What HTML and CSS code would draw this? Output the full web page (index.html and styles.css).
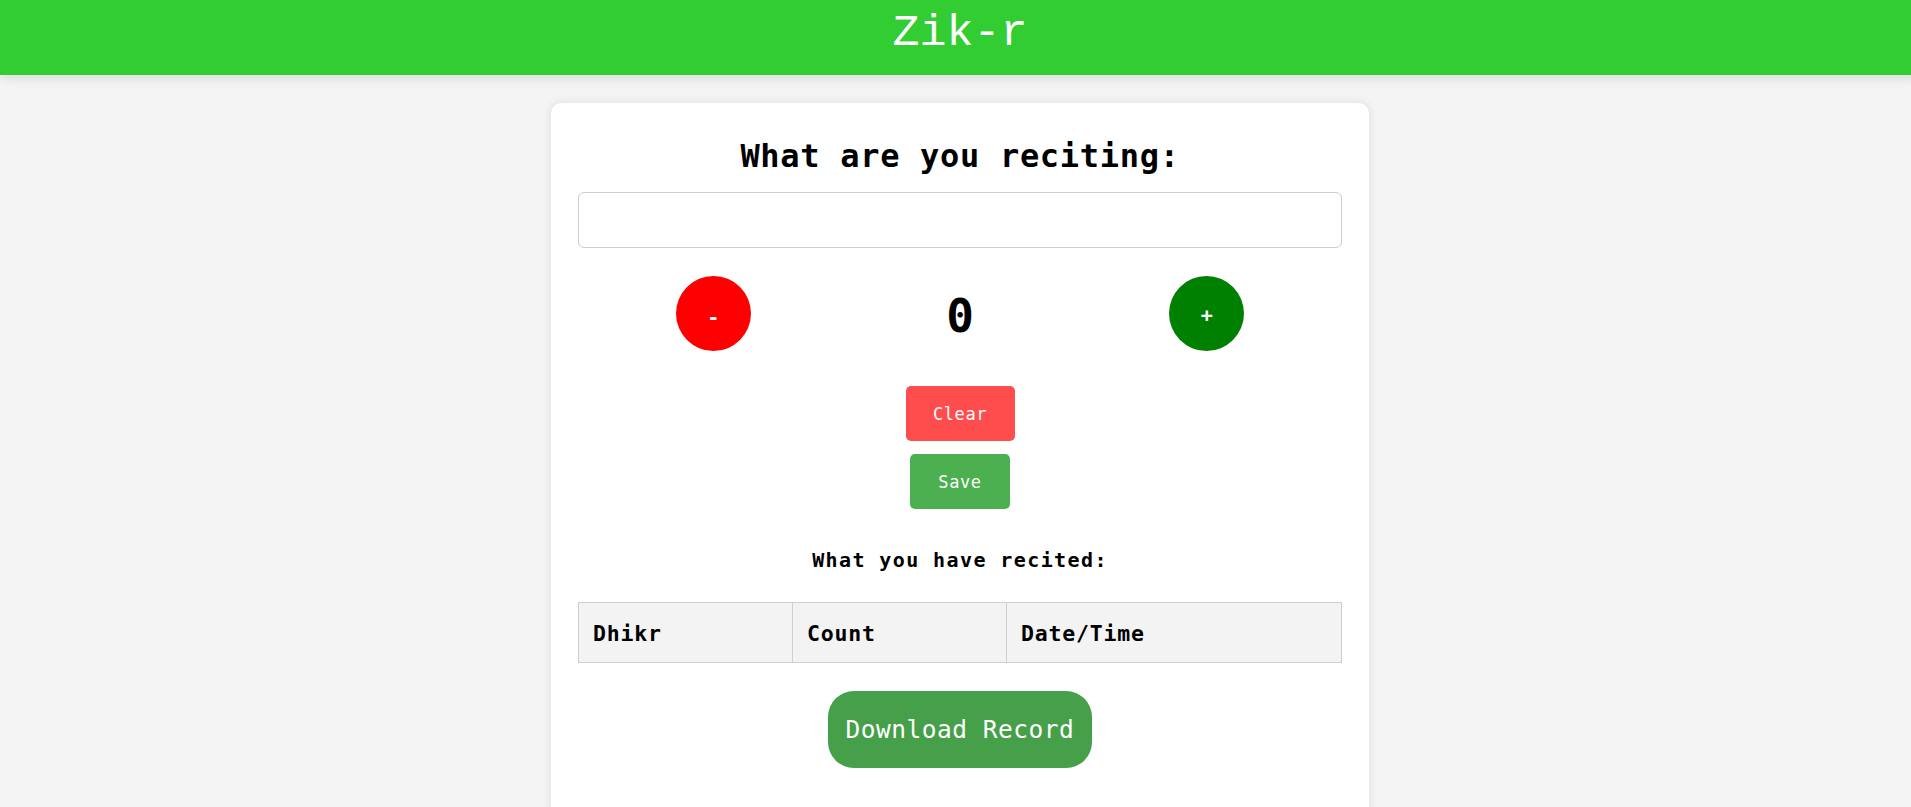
FILE: index.html
```html
<!DOCTYPE html>
<html lang="en">
<head>
<meta charset="utf-8">
<title>Zik-r</title>
<link rel="stylesheet" href="styles.css">
</head>
<body>
<div class="page">
  <header class="topbar">
    <h1 class="brand">Zik-r</h1>
  </header>
  <main class="main">
    <section class="card">
      <h2 class="prompt">What are you reciting:</h2>
      <input class="dhikr-input" type="text">
      <div class="counter">
        <button class="round minus">-</button>
        <span class="count">0</span>
        <button class="round plus">+</button>
      </div>
      <div class="actions">
        <button class="btn clear">Clear</button>
        <button class="btn save">Save</button>
      </div>
      <h3 class="history-title">What you have recited:</h3>
      <table class="history">
        <thead>
          <tr>
            <th class="col-dhikr">Dhikr</th>
            <th class="col-count">Count</th>
            <th class="col-date">Date/Time</th>
          </tr>
        </thead>
        <tbody></tbody>
      </table>
      <div class="download-wrap">
        <button class="download">Download Record</button>
      </div>
    </section>
  </main>
</div>
</body>
</html>
```

FILE: styles.css
```css
html, body {
  margin: 0;
  padding: 0;
  overflow: hidden;
}

body {
  background: #f4f4f4;
  font-family: "DejaVu Sans Mono", "Liberation Mono", monospace;
  color: #000;
}

.page {
  width: 1920px;
}

.topbar {
  height: 75px;
  background: #32cd32;
  box-shadow: 0 2px 12px rgba(0, 0, 0, 0.12);
  position: relative;
  z-index: 1;
}

.brand {
  margin: 0;
  text-align: center;
  font-family: "Liberation Mono", monospace;
  font-weight: normal;
  font-size: 45px;
  line-height: 67px;
  color: #fff;
}

.main {
  display: flex;
  justify-content: center;
  padding-top: 28px;
}

.card {
  width: 818px;
  box-sizing: border-box;
  background: #fff;
  border-radius: 10px;
  box-shadow: 0 0 10px rgba(0, 0, 0, 0.1);
  padding: 33px 27px 60px;
  min-height: 760px;
  display: flex;
  flex-direction: column;
  align-items: center;
}

.prompt {
  margin: 0;
  font-size: 32px;
  line-height: 40px;
  letter-spacing: 0.7px;
  font-weight: bold;
  text-align: center;
}

.dhikr-input {
  margin-top: 16px;
  width: 100%;
  height: 56px;
  box-sizing: border-box;
  border: 1px solid #cfcfcf;
  border-radius: 6px;
  font-family: inherit;
  font-size: 18px;
  padding: 0 12px;
  outline: none;
}

.counter {
  margin-top: 28px;
  width: 100%;
  display: flex;
  justify-content: space-around;
  align-items: center;
}

.round {
  width: 75px;
  height: 75px;
  border-radius: 50%;
  border: none;
  color: #fff;
  font-family: inherit;
  font-size: 20px;
  font-weight: bold;
  padding: 0;
  cursor: pointer;
}

.minus {
  background: #ff0000;
  padding-top: 6px;
}

.plus {
  background: #008000;
  padding-top: 2px;
}

.count {
  font-size: 46px;
  font-weight: bold;
  line-height: 56px;
  padding-top: 4px;
}

.actions {
  margin-top: 35px;
  display: flex;
  flex-direction: column;
  align-items: center;
  gap: 13px;
}

.btn {
  height: 55px;
  border: none;
  border-radius: 5px;
  color: #fff;
  font-family: inherit;
  font-size: 17px;
  letter-spacing: 0.6px;
  padding: 0;
  cursor: pointer;
}

.clear {
  width: 109px;
  background: #ff4d4d;
}

.save {
  width: 100px;
  background: #4caf50;
}

.history-title {
  margin: 39px 0 0;
  font-size: 20px;
  line-height: 24px;
  letter-spacing: 1.4px;
  font-weight: bold;
  text-align: center;
}

.history {
  margin-top: 30px;
  width: 100%;
  border-collapse: collapse;
}

.history th {
  height: 60px;
  padding: 2px 14px 0;
  background: #f3f3f3;
  border: 1px solid #cfcfcf;
  text-align: left;
  font-size: 21.5px;
  letter-spacing: 0.8px;
  font-weight: bold;
  box-sizing: border-box;
}

.col-dhikr,
.col-count {
  width: 214px;
}

.download-wrap {
  margin-top: 28px;
  display: flex;
  justify-content: center;
}

.download {
  width: 264px;
  height: 77px;
  border: none;
  border-radius: 26px;
  background: #45a049;
  color: #fff;
  font-family: inherit;
  font-size: 24.5px;
  letter-spacing: 0.5px;
  padding: 0;
  cursor: pointer;
}
```
